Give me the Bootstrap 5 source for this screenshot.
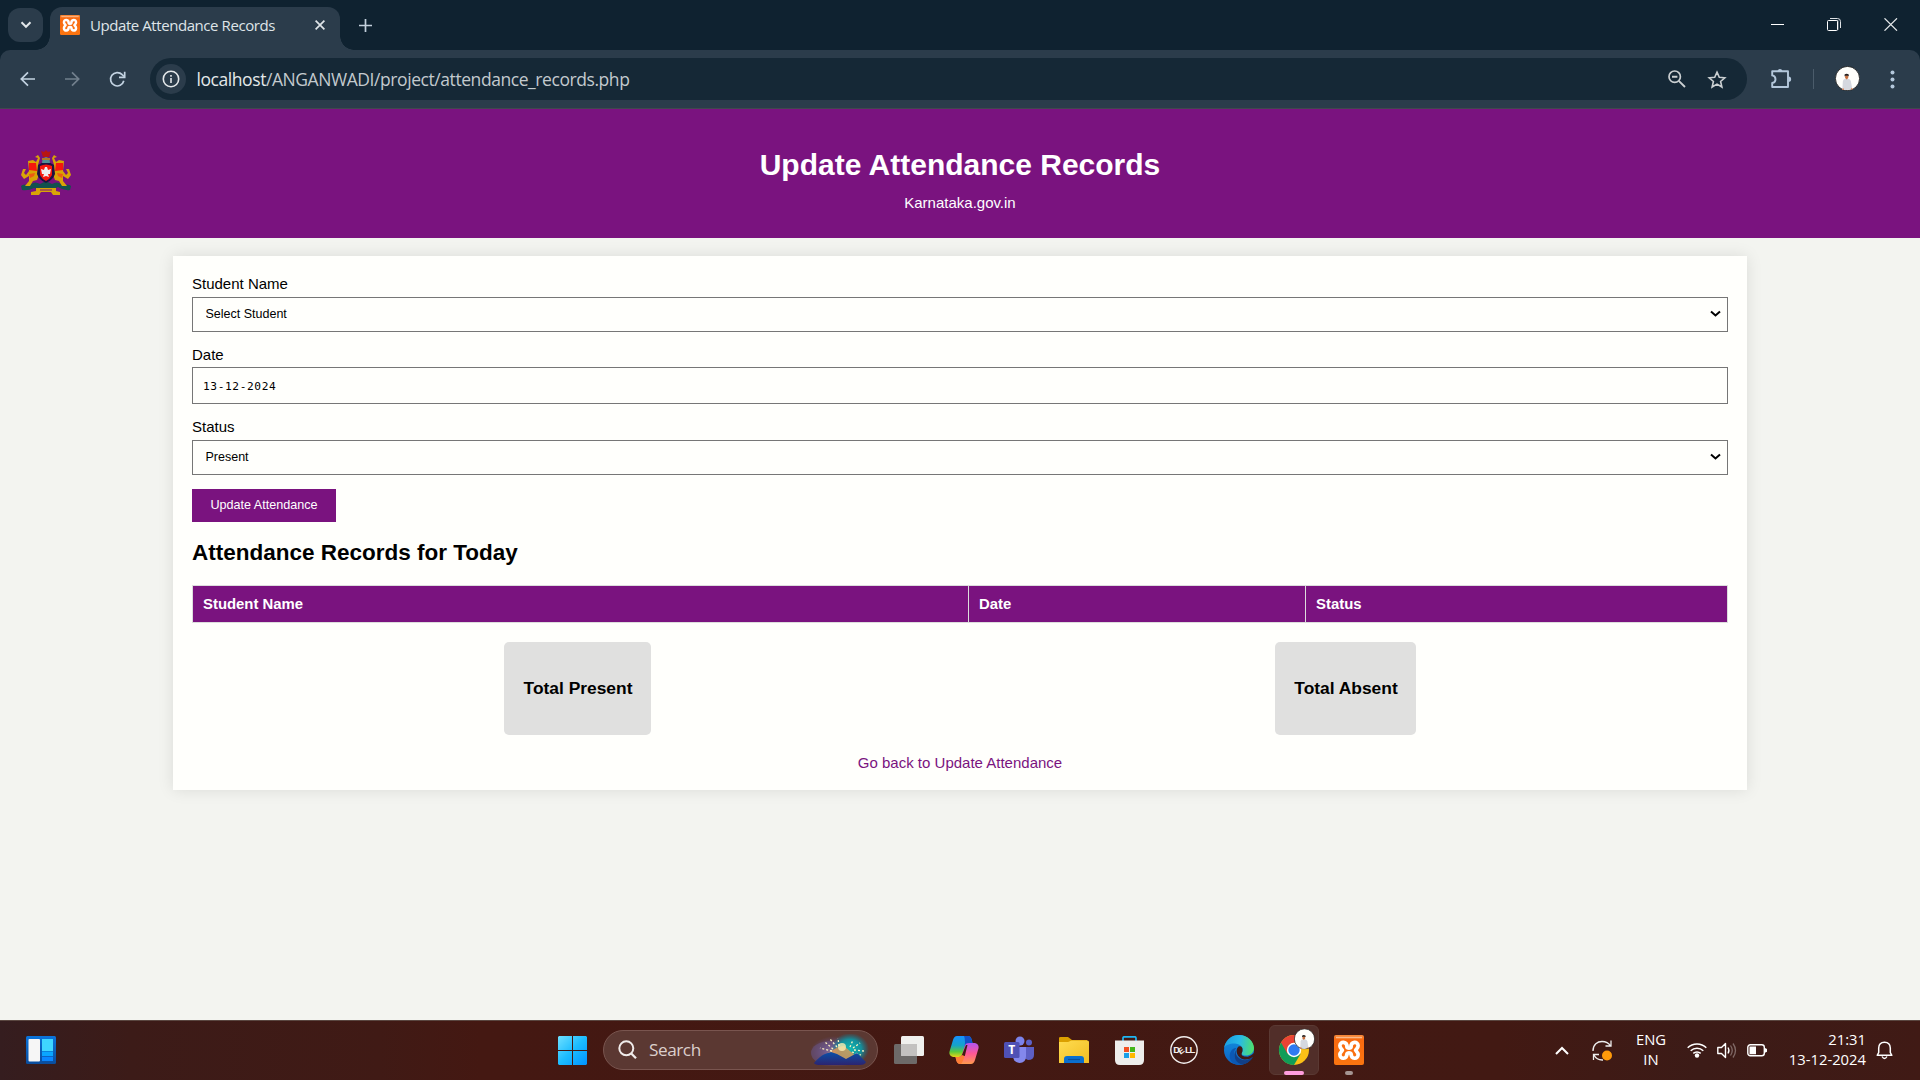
<!DOCTYPE html>
<html lang="en">
<head>
<meta charset="utf-8">
<title>Update Attendance Records</title>
<link href="https://cdn.jsdelivr.net/npm/bootstrap@5.3.0/dist/css/bootstrap.min.css" rel="stylesheet">
<style>
body{height:1080px;overflow:hidden;background:#f3f4f0;font-family:"Liberation Sans",Arial,sans-serif;color:#000}
svg{display:block;flex:none}
.ui-font{font-family:"Open Sans","Noto Sans",sans-serif}
.tabstrip{height:50px;background:#0f2230;padding-left:8px}
.tab-search{width:35px;height:34px;border-radius:12px;background:#2b3c4b;margin-top:8px}
.tab-active{width:290px;height:43px;margin:7px 0 0 7px;padding:0 15px 7px 10px;border-radius:12px 12px 0 0;background:#2b3c4b;position:relative}
.tab-active::before,.tab-active::after{content:"";position:absolute;bottom:0;width:14px;height:14px}
.tab-active::before{left:-14px;background:radial-gradient(circle at 0 0,transparent 13.5px,#2b3c4b 14px)}
.tab-active::after{right:-14px;background:radial-gradient(circle at 100% 0,transparent 13.5px,#2b3c4b 14px)}
.tab-title{font-size:15px;color:#dfe4e8;margin-left:10px;letter-spacing:-.43px;white-space:nowrap}
.toolbar-wrap{background:#0f2230}
.toolbar{height:59px;background:#2b3c4b;border-bottom:1px solid #41484e;border-radius:10px 10px 0 0;padding-left:18px}
.urlbar{width:1597px;height:42px;border-radius:21px;background:#152836;padding:0 20px 0 6px}
.info-dot{width:30px;height:30px;border-radius:50%;background:#2b3c4b}
.url-text{font-size:17.5px;color:#c3cace;margin-left:10.5px;letter-spacing:-.43px;white-space:nowrap}
.url-text b{font-weight:400;color:#e4e8ea}
.site-header{height:129px;background:#7a137f;color:#fff;display:grid;grid-template-columns:1fr auto 1fr;padding:0 20px}
.site-title{font-size:30px;font-weight:700;line-height:36px;margin:38px 0 10px}
.site-sub{font-size:15px;line-height:20px}
.panel{width:1574px;height:534px;margin:18px auto 0;padding:18px 19px 0;background:#fffffc;box-shadow:0 0 15px rgba(0,0,0,.1)}
.field-label{display:block;font-size:15px;line-height:20px}
.field-box{display:block;width:100%;border:1px solid #767676;border-radius:0;background:#fffffc;color:#000;outline:0}
.sel{height:35px;padding:0 8px 1px 12.500px;font:12.5px "Liberation Sans",sans-serif;appearance:none}
.sel-wrap{position:relative}
.sel-wrap svg{position:absolute;right:7px;top:13px;pointer-events:none}
.dateval{height:37px;padding:1px 10px 0;font:11.2px "DejaVu Sans Mono",monospace;letter-spacing:.6px}
.btn-update{width:144px;height:33px;border:0;border-radius:0;padding:0 0 1px;background:#7a137f;color:#fff;font-size:12.6px;line-height:1}
.h-today{font-size:22.5px;font-weight:700;line-height:28px;margin:17px 0 18px}
.rec{width:1536px;table-layout:fixed;border-collapse:collapse;margin:0}
.rec th{height:37px;border:1px solid #ddd;background:#7a137f;color:#fff;font-size:14.9px;line-height:18px;padding:0 10px}
.tot{height:93px;border-radius:5px;background:#e0e0df;font-size:17.4px;font-weight:700;padding-left:1px}
.back-link{color:#7a137f;font-size:15px;line-height:20px;text-decoration:none}
.taskbar{height:60px;padding-bottom:1px;border-top:1px solid #5a4640;color:#fff;background:linear-gradient(90deg,#351d1f 0,#3c1b18 130px,#401a15 380px,#441812 480px,#421913 1500px,#3c1b17 1700px,#401a15 1920px)}
.pill{width:275px;height:40px;border-radius:20px;background:#5b3832;border:1px solid #79554f;padding:0 7px 0 14px}
.slot{width:55px;height:58px}
.slot-on{width:50px;height:50px;border-radius:6px;background:#512e29;border:1px solid #5a3933}
.run-mark{bottom:4px;height:4px;border-radius:2px;left:50%;transform:translateX(-50%)}
.tray-text{font-size:14.8px;line-height:20px;white-space:nowrap;padding-bottom:3px}
</style>
<script src="https://cdn.jsdelivr.net/npm/bootstrap@5.3.0/dist/js/bootstrap.bundle.min.js"></script>
</head>
<body class="d-flex flex-column">
<svg width="0" height="0" class="position-absolute">
<defs>
<linearGradient id="gx" x1="0" y1="0" x2="0" y2="1"><stop offset="0" stop-color="#f58a3c"/><stop offset=".15" stop-color="#f96a10"/><stop offset="1" stop-color="#fb7510"/></linearGradient>
<symbol id="xampp" viewBox="0 0 30 30"><rect width="30" height="30" rx="2" fill="url(#gx)"/><path d="M2 2.500H28" stroke="#fbb98a" stroke-width="1.500"/><path d="M13 12.300C13.300 6 5.900 6 5.900 10.700C5.900 12.800 7.300 13.500 8.400 15.200C7.300 16.800 5.900 17.500 5.900 19.700C6 24.700 12.900 24.500 13 18.600C13.500 17.700 16.500 17.700 17 18.600C17.100 24.500 24 24.700 24.100 19.700C24.100 17.500 22.700 16.800 21.600 15.200C22.700 13.500 24.100 12.800 24.100 10.700C24.100 6 16.700 6 17 12.300C16.500 13.300 13.500 13.300 13 12.300Z" fill="none" stroke="#fff" stroke-width="3.700" stroke-linejoin="round"/></symbol>
<symbol id="person" viewBox="0 0 24 24"><circle cx="12" cy="12" r="11.600" fill="#fffffc" stroke="#1b1b1b" stroke-width=".8"/><path d="M7 22.500L7.600 14.500Q8 12.600 10 12.300H12.500Q14.800 12.700 15.200 14.500L16.500 21.500Q12 24 7 22.500Z" fill="#d5d8df"/><path d="M9.700 8.800H12.700V11.500L11.200 13L9.700 11.500Z" fill="#c9713f"/><path d="M9.200 10V8.200Q11.200 6.600 13.200 8.200V10L12.500 9.300H9.900Z" fill="#26201f"/><path d="M7 21.500H8.500V23H7ZM15.400 21.300H16.900V22.500H15.400Z" fill="#d97c4c"/></symbol>
</defs>
</svg>

<!-- Browser tab strip -->
<div class="tabstrip d-flex align-items-start flex-shrink-0 ui-font">
  <div class="tab-search d-flex align-items-center justify-content-center"><svg width="12" height="8" viewBox="0 0 12 8"><path d="M1.500 1.300L6 5.800L10.500 1.300" fill="none" stroke="#e2e7ea" stroke-width="2"/></svg></div>
  <div class="tab-active d-flex align-items-center">
    <svg width="20" height="20"><use href="#xampp"/></svg>
    <span class="tab-title">Update Attendance Records</span>
    <svg class="ms-auto" width="10" height="10" viewBox="0 0 10 10"><path d="M.6 .6L9.400 9.400M9.400 .6L.6 9.400" stroke="#dfe4e8" stroke-width="1.700"/></svg>
  </div>
  <svg width="13" height="13" viewBox="0 0 13 13" style="margin:18.500px 0 0 19px"><path d="M6.500 0V13M0 6.500H13" stroke="#c3d0dc" stroke-width="1.700"/></svg>
  <div class="ms-auto d-flex" style="margin:18px 22px 0 0;gap:43px">
    <svg width="13" height="13" viewBox="0 0 13 13"><path d="M0 6.500H13" stroke="#fff"/></svg>
    <svg width="14" height="13" viewBox="0 0 14 13"><path d="M3 .5H10.500Q13.500 .5 13.500 3.500V10" fill="none" stroke="#dde1e4"/><path d="M3 2.500H11V12" fill="none" stroke="#8b969f"/><rect x=".5" y="2.500" width="10" height="10" rx="1" fill="none" stroke="#fff"/></svg>
    <svg width="14" height="13" viewBox="0 0 14 13"><path d="M.5 .3L13 12.700M13 .3L.5 12.700" stroke="#e6e9eb" stroke-width="1.200"/></svg>
  </div>
</div>

<!-- Browser toolbar -->
<div class="toolbar-wrap flex-shrink-0"><div class="toolbar d-flex align-items-center ui-font">
  <svg width="18" height="16" viewBox="0 0 18 16"><path d="M17 8H3.500M10 1.300L3.300 8L10 14.700" fill="none" stroke="#c3d3e2" stroke-width="1.700"/></svg>
  <svg width="18" height="16" viewBox="0 0 18 16" style="margin-left:28px"><path d="M1 8H14.500M8 1.300L14.700 8L8 14.700" fill="none" stroke="#72808d" stroke-width="1.700"/></svg>
  <svg width="17" height="17" viewBox="0 0 17 17" style="margin:0 24px 0 27px"><path d="M14.800 9.800A6.700 6.700 0 1 1 13.200 3.700L15 5.500" fill="none" stroke="#c3d3e2" stroke-width="1.700"/><path d="M15.700 .7V6.300H10" fill="none" stroke="#c3d3e2" stroke-width="1.700"/></svg>
  <div class="urlbar d-flex align-items-center">
    <div class="info-dot d-flex align-items-center justify-content-center"><svg width="18" height="18" viewBox="0 0 18 18"><circle cx="9" cy="9" r="7.700" fill="none" stroke="#e4e8ea" stroke-width="1.600"/><path d="M9 8V13M9 5V6.700" stroke="#e4e8ea" stroke-width="1.600"/></svg></div>
    <span class="url-text"><b>localhost</b>/ANGANWADI/project/attendance_records.php</span>
    <svg class="ms-auto" width="18" height="18" viewBox="0 0 18 18"><circle cx="6.700" cy="6.700" r="5.700" fill="none" stroke="#cbd0d2" stroke-width="1.700"/><path d="M4 6.700H9.400M10.800 10.800L17 17" stroke="#cbd0d2" stroke-width="1.900"/></svg>
    <svg width="20" height="19" viewBox="0 0 20 19" style="margin-left:21px"><path d="M10 2.200L12.300 7.300L17.800 7.800L13.600 11.500L14.900 17L10 14.100L5.100 17L6.400 11.500L2.200 7.800L7.700 7.300Z" fill="none" stroke="#cbd0d2" stroke-width="1.600"/></svg>
  </div>
  <svg width="21" height="21" viewBox="0 0 21 21" style="margin-left:24px;margin-bottom:2px"><path d="M1.200 3.300H17V19H1.200V15Q4.500 14.500 4.500 11.200Q4.500 7.900 1.200 7.400Z" fill="none" stroke="#b4c8dc" stroke-width="1.900" stroke-linejoin="round"/><path d="M6.500 3A2.600 2.600 0 0 1 11.500 3ZM17.500 8.500A2.600 2.600 0 0 1 17.500 13.800Z" fill="#b4c8dc"/></svg>
  <div style="width:1px;height:20px;background:#4b5c6b;margin-left:21px"></div>
  <svg width="25" height="25" style="margin-left:21px;margin-bottom:1px"><use href="#person"/></svg>
  <svg width="5" height="19" viewBox="0 0 5 19" style="margin-left:30px"><g fill="#b4c8dc"><circle cx="2.500" cy="2.500" r="2"/><circle cx="2.500" cy="9.500" r="2"/><circle cx="2.500" cy="16.500" r="2"/></g></svg>
</div></div>

<!-- Page header -->
<header class="site-header flex-shrink-0">
  <svg width="52" height="48" viewBox="0 0 52 48" style="margin-top:40px">
    <path d="M1 37Q4 34 8 37Q14 31 20 35L26 32L32 35Q38 31 44 37Q48 34 51 37L50 41Q44 42 38 38Q32 42 26 41Q20 42 14 39Q8 42 2 41Z" fill="#12524e"/>
    <path d="M8 12L13 11L16 13L18 9L15 8L18 6L20 9L18 16L20 23L17 31L13 32L10 37H5L9 32L9 27L4 30L1 26L3 20L6 20L4 24L6 26L9 22Z" fill="#d9a406"/>
    <path d="M44 12L39 11L36 13L34 9L37 8L34 6L32 9L34 16L32 23L35 31L39 32L42 37H47L43 32L43 27L48 30L51 26L49 20L46 20L48 24L46 26L43 22Z" fill="#d9a406"/>
    <path d="M9 14H16L17 22L9 21ZM43 14H36L35 22L43 21Z" fill="#f5170d"/>
    <path d="M9 25L15 24L14 27L10 29ZM43 25L37 24L38 27L42 29Z" fill="#ee5a12"/>
    <path d="M18 16Q26 10 34 16L35 25Q33 31 26 34Q19 31 17 25Z" fill="#1d1240"/>
    <path d="M20 17Q26 14 32 17V26Q30 30 26 32Q22 30 20 26Z" fill="#f5170d"/>
    <path d="M21 20L24 21L25 18H27L28 21L31 20L30 25L28 25L29 28L26 27L23 28L24 25L22 25Z" fill="#eee"/>
    <path d="M22 14Q22 9 26 8Q30 9 30 14Z" fill="#4f9097"/><path d="M22 9H30V11H22Z" fill="#b07a25"/>
    <path d="M21 2L24 3L26 1L28 3L31 2L29 8H23Z" fill="#b81613"/>
    <path d="M16 39H36L36 42L40 43V46H33L31 43H21L19 46H11V43L16 42Z" fill="#d9a406"/><path d="M20 41H32" stroke="#7a137f" stroke-width="1"/>
  </svg>
  <div class="text-center">
    <h1 class="site-title">Update Attendance Records</h1>
    <div class="site-sub">Karnataka.gov.in</div>
  </div>
</header>

<!-- Attendance form and records -->
<main class="flex-grow-1">
  <div class="panel">
    <label class="field-label" style="margin-bottom:3px">Student Name</label>
    <div class="sel-wrap"><select class="field-box sel"><option>Select Student</option></select><svg width="11" height="8" viewBox="0 0 11 8"><path d="M1 1.500L5.500 5.500L10 1.500" fill="none" stroke="#000" stroke-width="2"/></svg></div>
    <label class="field-label" style="margin:13px 0 2px">Date</label>
    <input class="field-box dateval" type="text" value="13-12-2024">
    <label class="field-label" style="margin:13px 0 3px">Status</label>
    <div class="sel-wrap"><select class="field-box sel"><option>Present</option></select><svg width="11" height="8" viewBox="0 0 11 8"><path d="M1 1.500L5.500 5.500L10 1.500" fill="none" stroke="#000" stroke-width="2"/></svg></div>
    <button class="btn btn-update d-block" style="margin-top:14px">Update Attendance</button>
    <h2 class="h-today">Attendance Records for Today</h2>
    <table class="rec">
      <colgroup><col style="width:776px"><col style="width:337px"><col></colgroup>
      <thead><tr><th>Student Name</th><th>Date</th><th>Status</th></tr></thead>
    </table>
    <div class="d-flex justify-content-around" style="margin-top:19px">
      <div class="tot d-flex align-items-center justify-content-center" style="width:147px">Total Present</div>
      <div class="tot d-flex align-items-center justify-content-center" style="width:141px">Total Absent</div>
    </div>
    <div class="text-center" style="margin-top:16px"><a class="back-link" href="#">Go back to Update Attendance</a></div>
  </div>
</main>

<!-- Desktop taskbar -->
<footer class="taskbar d-flex align-items-center flex-shrink-0 ui-font">
  <svg width="30" height="28" viewBox="0 0 30 28" style="margin-left:26px;margin-bottom:1px"><defs><linearGradient id="gw" x1="0" y1="0" x2="0" y2="1"><stop offset="0" stop-color="#0a74dc"/><stop offset="1" stop-color="#0a4c9c"/></linearGradient></defs><rect width="30" height="28" rx="1.500" fill="url(#gw)"/><rect x="2.500" y="3" width="11.500" height="22.500" rx="1" fill="#f6f6f6"/><path d="M16 3H27V15H16Z" fill="#3fd6ff"/><path d="M16 15.500H27V20H16Z" fill="#0aa6ff"/><path d="M16 20.700H27V25H16Z" fill="#0a86ff"/></svg>
  <svg width="29" height="29" viewBox="0 0 29 29" style="margin-left:502px"><defs><linearGradient id="gs" x1="0" y1="0" x2="1" y2="1"><stop offset="0" stop-color="#6fe0ff"/><stop offset=".5" stop-color="#1cbcff"/><stop offset="1" stop-color="#0092ff"/></linearGradient></defs><path d="M1 0H14V14H0V1ZM15 0H28L29 1V14H15ZM0 15H14V29H1L0 28ZM15 15H29V28L28 29H15Z" fill="url(#gs)"/></svg>
  <div class="pill d-flex align-items-center" style="margin-left:16px">
    <svg width="19" height="20" viewBox="0 0 19 20"><circle cx="8.300" cy="8.300" r="7" fill="none" stroke="#f0ebea" stroke-width="2"/><path d="M13 13.300L18 18.300" stroke="#f0ebea" stroke-width="2.300"/></svg>
    <span style="font-size:17.200px;color:#dccfcc;margin-left:12px;letter-spacing:-.45px">Search</span>
    <svg class="ms-auto" width="60" height="32" viewBox="0 0 60 32"><defs><radialGradient id="gf1"><stop offset="0" stop-color="#d9b98f"/><stop offset=".35" stop-color="#80638f"/><stop offset="1" stop-color="#5f4a86" stop-opacity="0"/></radialGradient><radialGradient id="gf2"><stop offset="0" stop-color="#10b9b4"/><stop offset=".6" stop-color="#148f9b"/><stop offset="1" stop-color="#117a94" stop-opacity="0"/></radialGradient><linearGradient id="gm" x1="0" y1="0" x2="0" y2="1"><stop offset="0" stop-color="#0a50a8"/><stop offset="1" stop-color="#2c2470"/></linearGradient></defs><ellipse cx="25" cy="18" rx="25" ry="16" fill="url(#gf1)"/><ellipse cx="20" cy="19" rx="19" ry="12" fill="#67568c" opacity=".5"/><ellipse cx="40" cy="15" rx="19" ry="16" fill="url(#gf2)"/><path d="M18 19L28 13L34 12L46 22L38 27L26 22Z" fill="#ef9a50" opacity=".75"/><circle cx="32" cy="13" r="4" fill="#f9ecb0" opacity=".8"/><g stroke="#fff3c0" stroke-width="1.300" stroke-dasharray="2 2"><path d="M22 17L10 14M23 15L15 8M27 13L20 5M29 12L28 4M40 13L43 6M43 14L50 9M44 16L54 17M42 18L51 21"/></g><path d="M4 29Q10 22 15 20L21 18L27 20L36 25L47 19L56 28Q55 31 50 31H10Q5 31 4 29Z" fill="url(#gm)"/></svg>
  </div>
  <div class="d-flex" style="margin-left:3.500px">
    <div class="slot d-flex align-items-center justify-content-center"><svg width="30" height="28" viewBox="0 0 30 28"><rect y="8" width="23" height="20" rx="1.500" fill="#6d6a69"/><rect x="7" width="23" height="20" rx="1.500" fill="#f0f0ee"/><path d="M7 8H23V20H8.500Q7 20 7 18.500Z" fill="#c3c1c0"/></svg></div>
    <div class="slot d-flex align-items-center justify-content-center"><svg width="30" height="28" viewBox="0 0 30 28"><defs><linearGradient id="gc1" x1="0" y1="0" x2="0" y2="1"><stop offset="0" stop-color="#1690ff"/><stop offset=".45" stop-color="#16a3c9"/><stop offset=".75" stop-color="#5bc93d"/><stop offset="1" stop-color="#e8d317"/></linearGradient><linearGradient id="gc2" x1="0" y1="0" x2="0" y2="1"><stop offset="0" stop-color="#b355f0"/><stop offset=".5" stop-color="#ff5796"/><stop offset="1" stop-color="#ff9a4d"/></linearGradient></defs><path d="M8 0H19Q21.500 0 22.500 3L23.500 7H20Q18 7 17 10L14 19Q13 21 10 21H4Q0 20 .4 16L4 4Q5.200 0 8 0Z" fill="url(#gc1)"/><path d="M15 0H19Q21.500 0 22.500 3L23.500 7H20Q18 7 17 10L15 15Q17 4 15 0Z" fill="#1250c8"/><path d="M22 28H11Q8.500 28 7.500 25L6.500 21H10Q12.500 21 13.300 18L16 9Q17 7 20 7H26Q30 8 29.600 12L26 24Q24.800 28 22 28Z" fill="url(#gc2)"/><path d="M14.500 15L17 9H18.500L15.800 20H12.500Z" fill="#421913"/><path d="M6.500 21H10Q12 21 13 19L15.500 20Q14 26 12 28Q8.500 28 7.500 25Z" fill="#ff7d35"/></svg></div>
    <div class="slot d-flex align-items-center justify-content-center"><svg width="30" height="28" viewBox="0 0 30 28"><circle cx="16" cy="5" r="4.500" fill="#7b83eb"/><circle cx="25" cy="6.500" r="3" fill="#5d62c8"/><path d="M20 11H30V19Q30 24 24 24L20 22Z" fill="#5d5fc4"/><path d="M9 11H22V20Q22 27 15.500 27Q9 26 9 20Z" fill="#8488ec"/><rect y="6" width="15.500" height="16" rx="1.500" fill="#4f51b5"/><text x="7.700" y="18.200" text-anchor="middle" font-family="Open Sans,sans-serif" font-size="12" font-weight="700" fill="#fff">T</text></svg></div>
    <div class="slot d-flex align-items-center justify-content-center"><svg width="30" height="28" viewBox="0 0 30 28"><defs><linearGradient id="gfo" x1="0" y1="0" x2="1" y2="1"><stop offset="0" stop-color="#ffdc50"/><stop offset="1" stop-color="#f2bd22"/></linearGradient></defs><path d="M0 2Q0 1 1.500 1H9L13 4H28V10H0Z" fill="#dba000"/><path d="M0 6H9L12.500 4.500H28.500Q30 4.500 30 6V27H0Z" fill="url(#gfo)"/><path d="M5 27V23Q5 20 8 20H22Q25 20 25 23V27Z" fill="#0a6fcf"/><path d="M9 23.500H21" stroke="#0a4f9c" stroke-width="1.200"/></svg></div>
    <div class="slot d-flex align-items-center justify-content-center"><svg width="29" height="29" viewBox="0 0 29 29"><path d="M8 6V2Q8 .8 9.200 .8H19.800Q21 .8 21 2V6" fill="none" stroke="#1fb6f4" stroke-width="1.700"/><path d="M0 4.500H29V24Q29 29 24 29H5Q0 29 0 24Z" fill="#eeeeec"/><path d="M9 11H14V16H9Z" fill="#f25022"/><path d="M15 11H20V16H15Z" fill="#44b61a"/><path d="M9 17H14V22H9Z" fill="#1a9fe8"/><path d="M15 17H20V22H15Z" fill="#ffb900"/></svg></div>
    <div class="slot d-flex align-items-center justify-content-center"><svg width="28" height="28" viewBox="0 0 28 28"><circle cx="14" cy="14" r="13.200" fill="none" stroke="#f2eeed" stroke-width="1.400"/><g fill="#f2eeed" font-family="Liberation Sans,sans-serif" font-size="9.500" font-weight="700"><text x="3.200" y="17.400">D</text><text transform="translate(10.400 18.800) rotate(-36)" font-size="8.500">E</text><text x="14.900" y="17.400">L</text><text x="19.600" y="17.400">L</text></g></svg></div>
    <div class="slot d-flex align-items-center justify-content-center"><svg width="30" height="30" viewBox="0 0 30 30"><defs><linearGradient id="ge1" x1="0" y1=".4" x2="1" y2=".5"><stop offset="0" stop-color="#1b9de0"/><stop offset=".5" stop-color="#28b9e8"/><stop offset="1" stop-color="#4fe06a"/></linearGradient><linearGradient id="ge2" x1="0" y1="0" x2="0" y2="1"><stop offset="0" stop-color="#1390e0"/><stop offset="1" stop-color="#0c62c4"/></linearGradient></defs><circle cx="15" cy="15" r="15" fill="url(#ge2)"/><path d="M0 13C2 4 8 0 15 0C24 0 30 7 30 13C30 18 26 20.500 22 20.500C18 20.500 17 19 18 17.500C20 14 18 9 11 8.500C6 8.300 1.500 10 0 13Z" fill="url(#ge1)"/><path d="M12.500 13C7 18 11 29 20 29C16 31 9 30 6.500 25C4 19 8 12 12.500 13Z" fill="#0b58b4"/><path d="M12 15C10.500 21 16 26 23 25C25.500 24.500 28 22 29 20C30 22 26 28 19 29.500C12 29 8 21 12 15Z" fill="#123f86"/><path d="M14.500 11.500Q19 10.500 18.500 16Q17 19 18 20.500Q20 22 24 21.800Q27 21 30 18V21.500L28.500 22Q25 25 20 24.500C13 23 10.500 15 14.500 11.500Z" fill="#421913"/></svg></div>
    <div class="slot d-flex align-items-center justify-content-center position-relative"><div class="slot-on d-flex align-items-center justify-content-center"><svg width="48" height="48" viewBox="0 0 48 48"><circle cx="24" cy="24" r="15" fill="#fbc116"/><path d="M24 24L11 16.500A15 15 0 0 0 24 39L30.500 28Z" fill="#109d58"/><path d="M11 16.500A15 15 0 0 1 37 16.500H24L17.500 27.700Z" fill="#ea4335"/><circle cx="24" cy="24" r="7.200" fill="#fff"/><circle cx="24" cy="24" r="5.700" fill="#2f7bf2"/><svg x="24" y="2.500" width="21" height="21"><use href="#person"/></svg></svg></div><span class="run-mark position-absolute" style="width:20px;background:#ff9ede"></span></div>
    <div class="slot d-flex align-items-center justify-content-center position-relative"><svg width="30" height="30"><use href="#xampp"/></svg><span class="run-mark position-absolute" style="width:8px;background:#a59592"></span></div>
  </div>
  <div class="ms-auto d-flex align-items-center" style="margin-right:27px">
    <svg width="14" height="9" viewBox="0 0 14 9"><path d="M1 8L7 2L13 8" fill="none" stroke="#fff" stroke-width="2"/></svg>
    <svg width="21" height="21" viewBox="0 0 21 21" style="margin-left:23px"><path d="M1 11C1 4.500 5.500 1.500 10 1.500C14 1.500 17 3.500 18.500 6M19 .5V6H13.500M11 20C7 20.200 3.500 18 2 15M1.500 20V14.500H7" fill="none" stroke="#eee" stroke-width="1.300"/><circle cx="15" cy="15.500" r="5" fill="#ff9a0a"/></svg>
    <div class="tray-text text-center" style="width:36px;margin-left:20px">ENG<br>IN</div>
    <svg width="20" height="16" viewBox="0 0 20 16" style="margin-left:18px"><g fill="none" stroke="#fff" stroke-width="1.500"><path d="M.7 5.800A13 13 0 0 1 19.300 5.800"/><path d="M3.700 8.700A9 9 0 0 1 16.300 8.700"/><path d="M6.300 11.400A5.300 5.300 0 0 1 13.700 11.400"/></g><circle cx="10" cy="13.500" r="2.200" fill="#fff"/></svg>
    <svg width="20" height="17" viewBox="0 0 20 17" style="margin-left:10px"><path d="M.8 5.500H4.500L8.500 1.500V15.500L4.500 11.500H.8Z" fill="none" stroke="#fff" stroke-width="1.400" stroke-linejoin="round"/><path d="M11 5.500Q13 8.500 11 11.500" fill="none" stroke="#fff" stroke-width="1.300"/><path d="M13.500 3.500Q17 8.500 13.500 13.500M16 1.500Q21 8.500 16 15.500" fill="none" stroke="#806966" stroke-width="1.300"/></svg>
    <svg width="20" height="14" viewBox="0 0 20 14" style="margin-left:10px"><rect x=".8" y="1.800" width="16.500" height="11" rx="2.500" fill="none" stroke="#fff" stroke-width="1.400"/><path d="M2.500 3.500H9V11.200H2.500ZM18 5L20 6V8.700L18 9.700Z" fill="#fff"/></svg>
    <div class="tray-text text-end" style="margin-left:20px;width:79px">21:31<br>13-12-2024</div>
    <svg width="17" height="19" viewBox="0 0 17 19" style="margin-left:10px"><path d="M1.200 14.300L2.700 11.500V7Q2.900 1.200 8.500 1.200Q14.100 1.200 14.300 7V11.500L15.800 14.300Z" fill="none" stroke="#fff" stroke-width="1.500" stroke-linejoin="round"/><path d="M6 15.500Q8.500 19.500 11 15.500" fill="none" stroke="#fff" stroke-width="1.400"/></svg>
  </div>
</footer>
</body>
</html>
